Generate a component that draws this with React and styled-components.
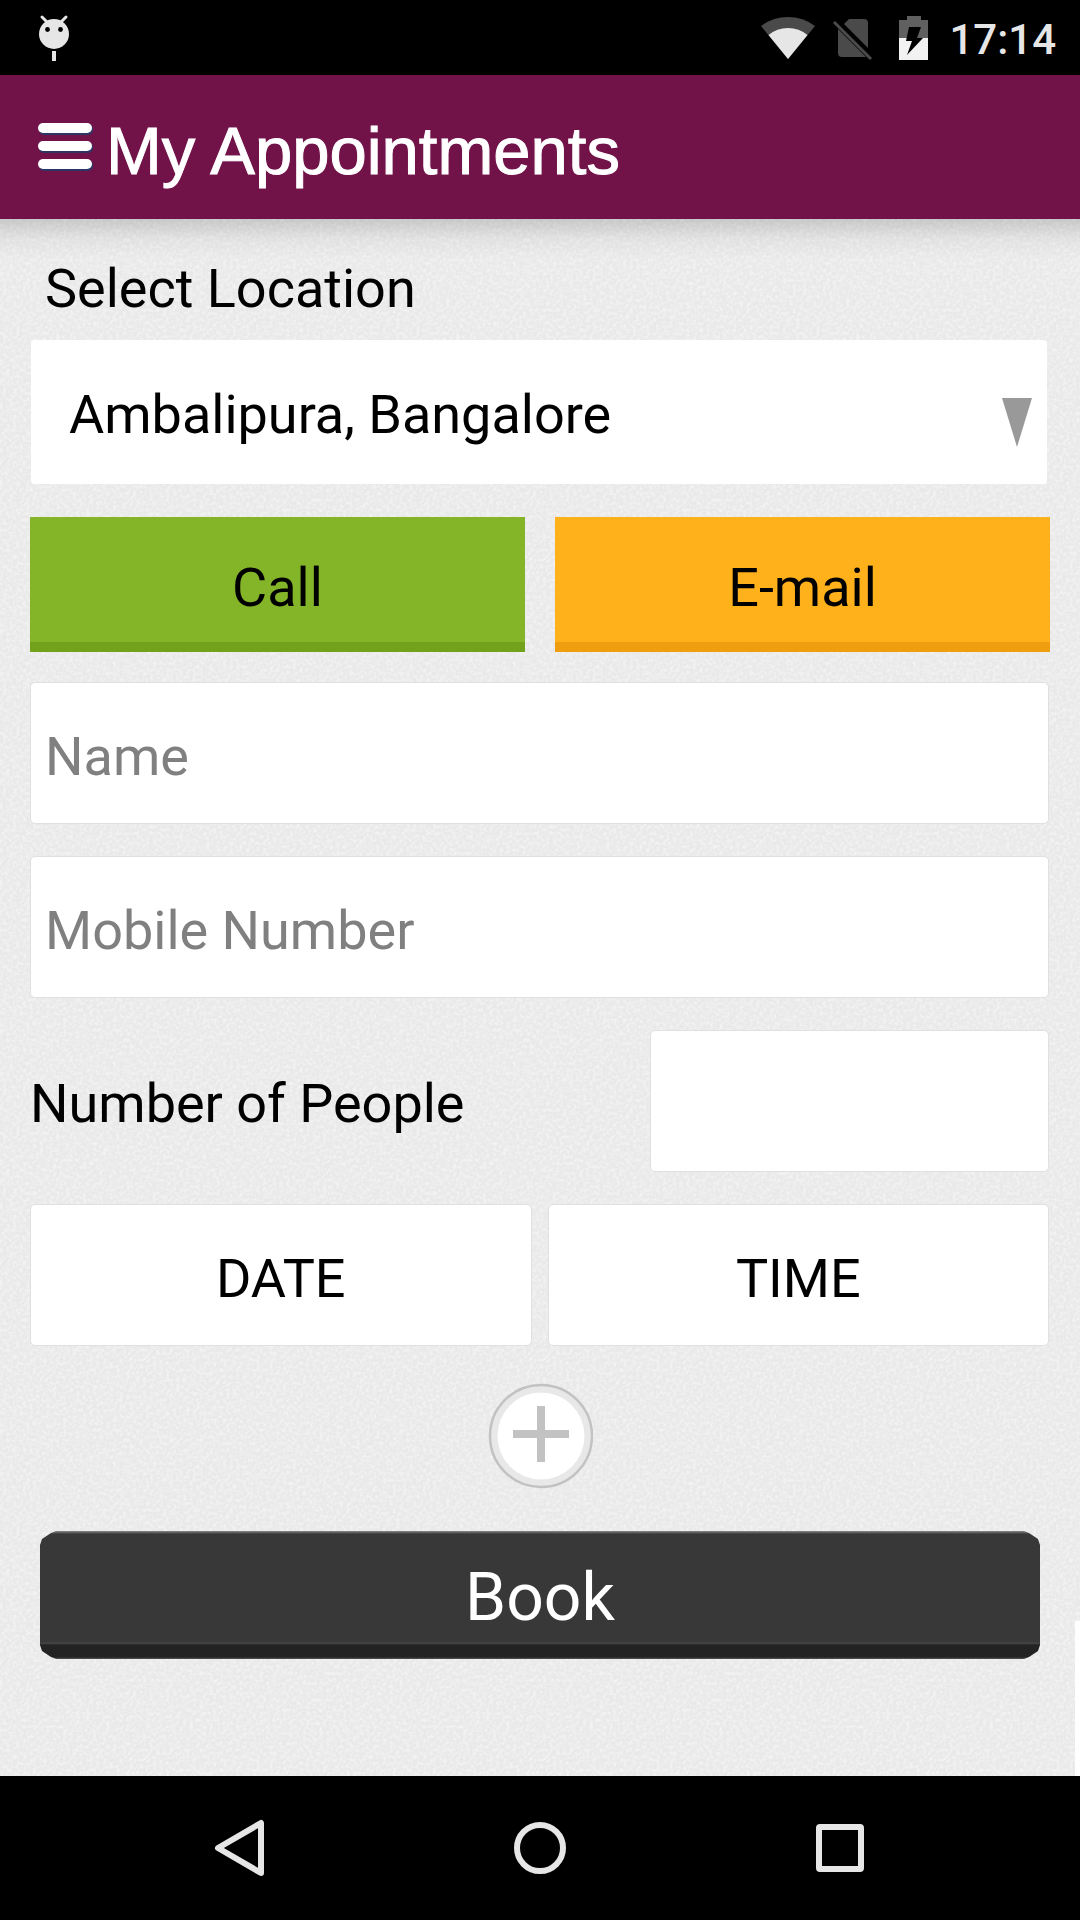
import React from "react";
import styled, { createGlobalStyle } from "styled-components";

const paperGrain =
  "url(\"data:image/svg+xml,%3Csvg xmlns='http://www.w3.org/2000/svg' width='400' height='400'%3E%3Cfilter id='n' x='0' y='0' width='100%25' height='100%25'%3E%3CfeTurbulence type='fractalNoise' baseFrequency='0.3' numOctaves='2' stitchTiles='stitch'/%3E%3CfeColorMatrix type='matrix' values='0 0 0 0 1 0 0 0 0 1 0 0 0 0 1 3 0 0 0 -1.2'/%3E%3C/filter%3E%3Crect width='400' height='400' filter='url(%23n)' opacity='0.4'/%3E%3C/svg%3E\")";

const GlobalStyle = createGlobalStyle`
  *, *::before, *::after { box-sizing: border-box; }
  body {
    margin: 0;
    background: #000;
    color: #000;
    font-family: Roboto, "Noto Sans", sans-serif;
  }
  button, input, select {
    margin: 0;
    border: 0;
    font-family: inherit;
    color: inherit;
    outline: none;
  }
  button { cursor: pointer; }
`;

const Screen = styled.div`
  display: flex;
  flex-direction: column;
  min-height: 100vh;
`;

const StatusBar = styled.div`
  display: flex;
  align-items: center;
  justify-content: space-between;
  height: 75px;
  padding: 0 24px 0 36px;
  background: #000;
`;

const StatusIcons = styled.div`
  display: flex;
  align-items: center;
  gap: 17px;
`;

const Clock = styled.time`
  padding-top: 4px;
  font-size: 42px;
  font-weight: 500;
  line-height: 50px;
  color: #e6e6e6;
`;

const AppBar = styled.header`
  display: flex;
  align-items: center;
  gap: 12px;
  height: 144px;
  padding: 0 34px;
  background: #711349;
`;

const MenuButton = styled.button`
  display: flex;
  padding: 0;
  background: none;
`;

const Title = styled.h1`
  margin: 0;
  padding-top: 8px;
  font-family: "Liberation Sans", Arial, sans-serif;
  font-size: 67px;
  font-weight: 400;
  line-height: 76px;
  color: #fff;
  -webkit-text-stroke: 1px #fff;
`;

const Content = styled.main`
  position: relative;
  flex: 1;
  padding: 38px 30px 110px;
  background:
    linear-gradient(rgba(0, 0, 0, 0.15), rgba(0, 0, 0, 0.04) 20px, transparent 40px),
    ${paperGrain},
    #e9e9e9;
`;

const Form = styled.form`
  display: flex;
  flex-direction: column;
  gap: 30px;
`;

const Label = styled.label`
  font-size: 54px;
  line-height: 64px;
  padding-left: ${(p) => (p.$indent ? "15px" : "0")};
`;

const LocationGroup = styled.div`
  display: flex;
  flex-direction: column;
  gap: 19px;
  padding-bottom: 3px;
`;

const SelectWrap = styled.div`
  position: relative;
  margin: 0 3px 0 1px;
`;

const Select = styled.select`
  display: block;
  width: 100%;
  height: 144px;
  padding: 4px 80px 0 38px;
  appearance: none;
  border-radius: 4px;
  background: #fff;
  font-size: 54px;
`;

const SelectArrow = styled.svg`
  position: absolute;
  top: 57px;
  right: 15px;
  pointer-events: none;
`;

const ContactRow = styled.div`
  display: grid;
  grid-template-columns: 1fr 1fr;
  gap: 30px;
`;

const ContactButton = styled.button`
  height: 135px;
  padding: 6px 0 0;
  background: ${(p) => p.$color};
  box-shadow: inset 0 -10px 0 ${(p) => p.$edge};
  font-size: 54px;
`;

const Fields = styled.div`
  display: flex;
  flex-direction: column;
  gap: 32px;
  padding-right: 1px;
`;

const TextField = styled.input`
  width: ${(p) => (p.$short ? "399px" : "100%")};
  height: 142px;
  padding: 6px 14px 0;
  border: 1px solid #e0e0e0;
  border-radius: 5px;
  background: #fff;
  font-size: 54px;
  &::placeholder { color: #808080; opacity: 1; }
`;

const PeopleRow = styled.div`
  display: flex;
  align-items: center;
  justify-content: space-between;

  ${Label} { padding-top: 6px; }
`;

const PickerRow = styled.div`
  display: grid;
  grid-template-columns: 1fr 1fr;
  gap: 16px;
`;

const PickerButton = styled.button`
  height: 142px;
  padding: 6px 0 0;
  border: 1px solid #e0e0e0;
  border-radius: 5px;
  background: #fff;
  font-size: 54px;
`;

const AddButton = styled.button`
  display: flex;
  align-self: center;
  padding: 7px 0 12px;
  background: none;
`;

const BookButton = styled.button`
  height: 128px;
  margin: 0 10px;
  padding: 4px 0 0;
  background: linear-gradient(
    #8a8a8a, #383838 3px, #383838 111px, #4a4a4a 112px, #232323 114px, #232323 126px, #555
  );
  clip-path: polygon(
    0 14px, 2px 8px, 11px 2px, 16px 0,
    calc(100% - 16px) 0, calc(100% - 11px) 2px, calc(100% - 2px) 8px, 100% 14px,
    100% calc(100% - 14px), calc(100% - 2px) calc(100% - 8px), calc(100% - 11px) calc(100% - 2px), calc(100% - 16px) 100%,
    16px 100%, 11px calc(100% - 2px), 2px calc(100% - 8px), 0 calc(100% - 14px)
  );
  font-size: 66px;
  color: #fff;
`;

const ScrollThumb = styled.div`
  position: absolute;
  right: 0;
  bottom: 0;
  width: 5px;
  height: 155px;
  background: #fff;
`;

const NavBar = styled.nav`
  display: grid;
  grid-template-columns: repeat(3, 1fr);
  height: 144px;
  padding: 0 90px;
  background: #000;
`;

const NavButton = styled.button`
  display: flex;
  align-items: center;
  justify-content: center;
  padding: 0;
  background: none;
`;

const DebugIcon = () => (
  <svg width="36" height="48" viewBox="0 0 36 48" aria-hidden="true">
    <path d="M6 3l5 5M30 3l-5 5" stroke="#e6e6e6" strokeWidth="3" strokeLinecap="round" />
    <circle cx="18" cy="20" r="15" fill="#e6e6e6" />
    <circle cx="11.5" cy="15.5" r="2.4" fill="#000" />
    <circle cx="24.5" cy="15.5" r="2.4" fill="#000" />
    <path d="M16 37h4v10h-4z" fill="#e6e6e6" />
  </svg>
);

const WifiIcon = () => (
  <svg width="54" height="44" viewBox="0 0 54 44" aria-hidden="true">
    <path d="M27 43L0 10Q12 1 27 1T54 10z" fill="#4a4a4a" />
    <path d="M27 43L7.5 19Q16 12 27 12T46.5 19z" fill="#e6e6e6" />
  </svg>
);

const NoSimIcon = () => (
  <svg width="50" height="44" viewBox="0 0 50 44" aria-hidden="true">
    <path d="M12 8L17 3H32Q36 3 36 7V32z" fill="#4a4a4a" />
    <path d="M6 13L34 41H10Q6 41 6 37z" fill="#4a4a4a" />
    <path d="M2 6L39 43" stroke="#4a4a4a" strokeWidth="3" />
  </svg>
);

const BatteryIcon = () => (
  <svg width="33" height="46" viewBox="0 0 33 46" aria-hidden="true">
    <path d="M8 1h14v4h7v18H0V5h8z" fill="#606060" />
    <path d="M0 23h29v22H0z" fill="#f2f2f2" />
    <path d="M10 12H22L18 23H24L8 40L13 26H7z" fill="#000" />
  </svg>
);

const MenuIcon = () => (
  <svg width="60" height="52" viewBox="0 0 60 52" aria-hidden="true">
    <g fill="#2d3565">
      <rect x="5" y="3" width="54" height="11" rx="5" />
      <rect x="5" y="21" width="54" height="11" rx="5" />
      <rect x="5" y="39" width="54" height="11" rx="5" />
    </g>
    <g fill="#fff">
      <rect x="4" y="2" width="54" height="10" rx="5" />
      <rect x="4" y="20" width="54" height="10" rx="5" />
      <rect x="4" y="38" width="54" height="10" rx="5" />
    </g>
  </svg>
);

const AddIcon = () => (
  <svg width="106" height="106" viewBox="0 0 106 106" aria-hidden="true">
    <circle cx="54" cy="53" r="51" fill="#e8e8e8" stroke="#c2c2c2" strokeWidth="2.5" />
    <circle cx="54" cy="53" r="43.5" fill="#fff" />
    <path d="M26 51H82M54 23V79" stroke="#c2c2c2" strokeWidth="8" />
  </svg>
);

export default function App() {
  return (
    <>
      <GlobalStyle />
      <Screen>
        <StatusBar>
          <DebugIcon />
          <StatusIcons>
            <WifiIcon />
            <NoSimIcon />
            <BatteryIcon />
            <Clock>17:14</Clock>
          </StatusIcons>
        </StatusBar>
        <AppBar>
          <MenuButton type="button" aria-label="Menu">
            <MenuIcon />
          </MenuButton>
          <Title>My Appointments</Title>
        </AppBar>
        <Content>
          <Form onSubmit={(e) => e.preventDefault()}>
            <LocationGroup>
              <Label htmlFor="location" $indent>Select Location</Label>
              <SelectWrap>
                <Select id="location">
                  <option>Ambalipura, Bangalore</option>
                </Select>
                <SelectArrow width="30" height="50" viewBox="0 0 30 50" aria-hidden="true">
                  <path d="M0 1H30L15 50z" fill="#999" />
                </SelectArrow>
              </SelectWrap>
            </LocationGroup>
            <ContactRow>
              <ContactButton type="button" $color="#84b428" $edge="#72a11c">Call</ContactButton>
              <ContactButton type="button" $color="#ffb11c" $edge="#ee9e0f">E-mail</ContactButton>
            </ContactRow>
            <Fields>
              <TextField type="text" placeholder="Name" aria-label="Name" />
              <TextField type="tel" placeholder="Mobile Number" aria-label="Mobile Number" />
              <PeopleRow>
                <Label htmlFor="people">Number of People</Label>
                <TextField id="people" type="text" inputMode="numeric" $short />
              </PeopleRow>
              <PickerRow>
                <PickerButton type="button">DATE</PickerButton>
                <PickerButton type="button">TIME</PickerButton>
              </PickerRow>
            </Fields>
            <AddButton type="button" aria-label="Add">
              <AddIcon />
            </AddButton>
            <BookButton type="submit">Book</BookButton>
          </Form>
          <ScrollThumb />
        </Content>
        <NavBar aria-label="System">
          <NavButton type="button" aria-label="Back">
            <svg width="60" height="60" viewBox="0 0 60 60" aria-hidden="true">
              <path d="M8 30L51 5V55z" fill="none" stroke="#e6e6e6" strokeWidth="6" strokeLinejoin="round" />
            </svg>
          </NavButton>
          <NavButton type="button" aria-label="Home">
            <svg width="60" height="60" viewBox="0 0 60 60" aria-hidden="true">
              <circle cx="30" cy="30" r="23" fill="none" stroke="#e6e6e6" strokeWidth="6" />
            </svg>
          </NavButton>
          <NavButton type="button" aria-label="Recent apps">
            <svg width="60" height="60" viewBox="0 0 60 60" aria-hidden="true">
              <rect x="9" y="9" width="42" height="42" rx="1" fill="none" stroke="#e6e6e6" strokeWidth="6" strokeLinejoin="round" />
            </svg>
          </NavButton>
        </NavBar>
      </Screen>
    </>
  );
}
